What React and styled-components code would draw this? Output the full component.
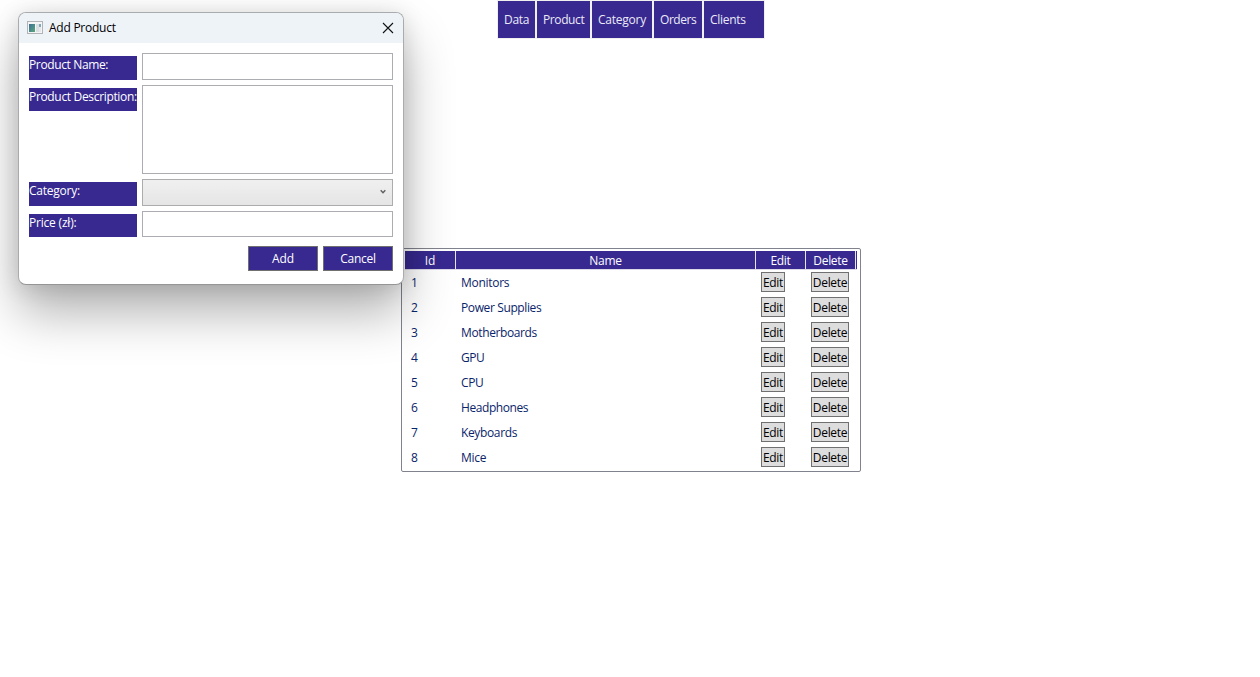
import React from "react";
import styled, { createGlobalStyle } from "styled-components";

const GlobalStyle = createGlobalStyle`
  *, *::before, *::after { box-sizing: border-box; }
  body {
    margin: 0;
    background: #fff;
    font-family: "Open Sans", "Noto Sans", sans-serif;
    font-size: 12px;
    line-height: 17px;
    overflow: hidden;
  }
  button { font: inherit; letter-spacing: inherit; }
`;

const indigo = "#372990";

const Page = styled.main`
  position: relative;
  display: flex;
  flex-direction: column;
  align-items: center;
  width: 100%;
  height: 677px;
  padding-left: 2px;
  background: #fff;
`;

const Text = styled.span`
  white-space: nowrap;
  letter-spacing: ${(p) => p.$track ?? -0.3}px;
`;

const Menu = styled.nav`
  display: flex;
  gap: 2px;
  width: 268px;
  height: 39px;
  padding: 1px;
  background: #f0f0f0;
`;

const MenuItem = styled.a`
  display: flex;
  align-items: center;
  width: ${(p) => p.$width}px;
  padding: 0 0 0 6px;
  background: ${indigo};
  color: #eceaf6;
`;

const Grid = styled.section`
  width: 460px;
  height: 224px;
  margin-top: 209px;
  padding: 2px 3px 0;
  border: 1px solid #80838d;
  border-radius: 2px;
`;

const GridHeader = styled.div`
  display: flex;
  width: 452px;
  height: 19px;
  border-bottom: 1px solid #dcdae8;
  background: ${indigo};
  color: #fff;
`;

const HeaderCell = styled.div`
  display: flex;
  align-items: center;
  justify-content: center;
  width: ${(p) => p.$width}px;
  border-right: 1px solid #e6e4f0;
  padding-top: 1px;
`;

const GridRow = styled.div`
  display: flex;
  height: 25px;
  color: #0a246a;
`;

const Cell = styled.div`
  display: flex;
  align-items: center;
  width: ${(p) => p.$width}px;
  padding-left: 6px;
`;

const ButtonCell = styled(Cell)`
  padding-bottom: 1px;
`;

const RowButton = styled.button`
  display: flex;
  align-items: flex-start;
  justify-content: center;
  width: ${(p) => p.$width}px;
  height: 20px;
  padding: 1px 0 0;
  border: 1px solid #707070;
  background: #ddd;
  color: #000;
`;

const Dialog = styled.section`
  position: absolute;
  left: 18px;
  top: 12px;
  width: 386px;
  height: 273px;
  border: 1px solid #a9abad;
  border-bottom-color: #959595;
  border-radius: 8px;
  background: #fff;
  box-shadow: 0 28px 50px rgba(0, 0, 0, 0.3), 0 2px 22px rgba(0, 0, 0, 0.13);
`;

const TitleBar = styled.header`
  display: flex;
  align-items: center;
  height: 30px;
  padding: 0 9px 0 8px;
  border-radius: 7px 7px 0 0;
  background: #eef3f8;
  color: #000;
`;

const Title = styled.h1`
  flex: 1;
  margin: 0 0 1px 6px;
  font-size: 12px;
  font-weight: 400;
`;

const CloseButton = styled.button`
  display: flex;
  padding: 0;
  border: 0;
  background: none;
`;

const Form = styled.form`
  display: flex;
  flex-direction: column;
  gap: 5px;
  padding: 10px 10px 0;
`;

const FormRow = styled.div`
  display: flex;
  gap: 5px;
  height: ${(p) => p.$height}px;
`;

const Label = styled.label`
  display: flex;
  align-items: flex-start;
  width: 108px;
  height: ${(p) => p.$height}px;
  margin-top: 3px;
  background: ${indigo};
  color: #fff;
`;

const Field = styled.div`
  width: 251px;
  border: 1px solid #abadb3;
  background: #fff;
`;

const Select = styled(Field)`
  display: flex;
  align-items: center;
  justify-content: flex-end;
  padding: 0 6px 2px 0;
  border-color: #acacac;
  background: linear-gradient(#f0f0f0, #e5e5e5);
`;

const Actions = styled.div`
  display: flex;
  justify-content: flex-end;
  gap: 5px;
  padding-top: 4px;
`;

const ActionButton = styled.button`
  display: flex;
  align-items: center;
  justify-content: center;
  width: 70px;
  height: 25px;
  padding: 0;
  border: 1px solid #707070;
  background: ${indigo};
  color: #fff;
`;

const menuItems = [
  ["Data", 37, -0.3],
  ["Product", 53, -0.4],
  ["Category", 60, -0.25],
  ["Orders", 48, -0.45],
  ["Clients", 60, -0.3],
];

const categories = [
  ["Monitors", -0.28],
  ["Power Supplies", -0.38],
  ["Motherboards", -0.38],
  ["GPU", -0.5],
  ["CPU", -0.4],
  ["Headphones", -0.42],
  ["Keyboards", -0.36],
  ["Mice", -0.25],
];

const AppIcon = () => (
  <svg width="16" height="14" viewBox="0 0 16 14" shapeRendering="crispEdges">
    <defs>
      <linearGradient id="pane" x1="0" y1="0" x2="1" y2="1">
        <stop offset="0" stopColor="#3b6f98" />
        <stop offset="1" stopColor="#5aa77b" />
      </linearGradient>
    </defs>
    <rect x="0.5" y="0.5" width="15" height="12" fill="#f5f5f5" stroke="#b0b4b8" />
    <rect x="2" y="3" width="6" height="8" fill="url(#pane)" />
    <rect x="9" y="3" width="3" height="8" fill="#dcdfe2" />
    <rect x="12" y="3" width="2" height="3" fill="#7fa9b5" />
    <rect x="12" y="6" width="2" height="5" fill="#e5e8ea" />
  </svg>
);

export default function App() {
  return (
    <>
      <GlobalStyle />
      <Page>
        <Menu>
          {menuItems.map(([name, width, track]) => (
            <MenuItem key={name} $width={width}>
              <Text $track={track}>{name}</Text>
            </MenuItem>
          ))}
        </Menu>

        <Grid>
          <GridHeader>
            <HeaderCell $width={51}><Text $track={0}>Id</Text></HeaderCell>
            <HeaderCell $width={300}><Text>Name</Text></HeaderCell>
            <HeaderCell $width={50}><Text>Edit</Text></HeaderCell>
            <HeaderCell $width={50}><Text>Delete</Text></HeaderCell>
          </GridHeader>
          {categories.map(([name, track], i) => (
            <GridRow key={name}>
              <Cell $width={50}><Text>{i + 1}</Text></Cell>
              <Cell $width={300}><Text $track={track}>{name}</Text></Cell>
              <ButtonCell $width={50}>
                <RowButton $width={24}><Text>Edit</Text></RowButton>
              </ButtonCell>
              <ButtonCell $width={50}>
                <RowButton $width={38}><Text>Delete</Text></RowButton>
              </ButtonCell>
            </GridRow>
          ))}
        </Grid>

        <Dialog>
          <TitleBar>
            <AppIcon />
            <Title><Text $track={-0.25}>Add Product</Text></Title>
            <CloseButton aria-label="Close">
              <svg width="12" height="12" viewBox="0 0 12 12">
                <path d="M1 1L11 11M11 1L1 11" stroke="#111" strokeWidth="1.1" />
              </svg>
            </CloseButton>
          </TitleBar>
          <Form>
            <FormRow $height={27}>
              <Label $height={24}><Text $track={-0.37}>Product Name:</Text></Label>
              <Field />
            </FormRow>
            <FormRow $height={89}>
              <Label $height={23}><Text $track={-0.33}>Product Description:</Text></Label>
              <Field />
            </FormRow>
            <FormRow $height={27}>
              <Label $height={24}><Text $track={-0.25}>Category:</Text></Label>
              <Select>
                <svg width="6" height="6" viewBox="0 0 6 6">
                  <path d="M0.7 1.2L3 3.8L5.3 1.2" fill="none" stroke="#606060" strokeWidth="1.4" />
                </svg>
              </Select>
            </FormRow>
            <FormRow $height={26}>
              <Label $height={23}><Text $track={-0.2}>Price (zł):</Text></Label>
              <Field />
            </FormRow>
            <Actions>
              <ActionButton type="button"><Text $track={-0.1}>Add</Text></ActionButton>
              <ActionButton type="button"><Text $track={-0.25}>Cancel</Text></ActionButton>
            </Actions>
          </Form>
        </Dialog>
      </Page>
    </>
  );
}
